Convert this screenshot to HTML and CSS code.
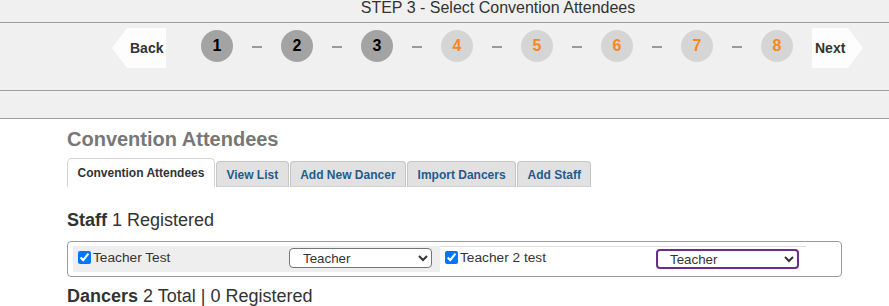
FILE: index.html
```html
<!DOCTYPE html>
<html lang="en">
<head>
<meta charset="utf-8">
<title>Convention Attendees</title>
<link rel="stylesheet" href="styles.css">
</head>
<body>
<header class="wizard">
  <div class="step-title">STEP 3 - Select Convention Attendees</div>
  <nav class="steps">
    <a class="nav-btn back">Back</a>
    <span class="step done">1</span><span class="dash"></span>
    <span class="step done">2</span><span class="dash"></span>
    <span class="step done">3</span><span class="dash"></span>
    <span class="step todo">4</span><span class="dash"></span>
    <span class="step todo">5</span><span class="dash"></span>
    <span class="step todo">6</span><span class="dash"></span>
    <span class="step todo">7</span><span class="dash"></span>
    <span class="step todo">8</span>
    <a class="nav-btn next">Next</a>
  </nav>
  <div class="band"></div>
</header>
<main class="content">
  <h1 class="page-title">Convention Attendees</h1>
  <ul class="tabs">
    <li class="tab active">Convention Attendees</li>
    <li class="tab">View List</li>
    <li class="tab">Add New Dancer</li>
    <li class="tab">Import Dancers</li>
    <li class="tab">Add Staff</li>
  </ul>
  <h2 class="section"><b>Staff</b> 1 Registered</h2>
  <div class="staff-box">
    <div class="staff-row">
      <div class="staff-cell odd">
        <label class="person"><input type="checkbox" checked><span>Teacher Test</span></label>
        <select class="role"><option>Teacher</option></select>
      </div>
      <div class="staff-cell even">
        <label class="person"><input type="checkbox" checked><span>Teacher 2 test</span></label>
        <select class="role focused"><option>Teacher</option></select>
      </div>
    </div>
  </div>
  <h2 class="section dancers"><b>Dancers</b> 2 Total | 0 Registered</h2>
</main>
</body>
</html>
```
FILE: styles.css
```css
* { box-sizing: border-box; }
html, body { margin: 0; padding: 0; }
body {
  font-family: "Liberation Sans", Arial, sans-serif;
  color: #333;
  background: #fff;
  width: 889px;
  height: 306px;
  overflow: hidden;
}

.wizard { background: #f0f0f0; }

.step-title {
  height: 23px;
  font-size: 16px;
  line-height: 16px;
  text-align: center;
  padding-left: 107px;
  border-bottom: 1px solid #9d9d9d;
  color: #333;
}

.steps {
  display: flex;
  align-items: flex-start;
  height: 68px;
  padding-left: 112px;
  border-bottom: 1px solid #9d9d9d;
}

.nav-btn {
  display: block;
  height: 40px;
  margin-top: 5px;
  background: #fdfdfd;
  font-size: 14px;
  font-weight: bold;
  line-height: 40px;
  color: #333;
}
.nav-btn.back {
  width: 54px;
  padding-left: 18px;
  margin-right: 35px;
  clip-path: polygon(15px 0, 100% 0, 100% 100%, 15px 100%, 0 50%);
}
.nav-btn.next {
  width: 51px;
  padding-left: 3px;
  margin-left: 19px;
  clip-path: polygon(0 0, 36px 0, 100% 50%, 36px 100%, 0 100%);
}

.step {
  width: 32px;
  height: 32px;
  margin-top: 7px;
  border-radius: 50%;
  font-size: 16px;
  font-weight: bold;
  line-height: 31px;
  text-align: center;
}
.step.done { background: #a3a3a3; color: #000; }
.step.todo { background: #d5d5d5; color: #f7861f; }

.dash {
  width: 10px;
  height: 2px;
  margin: 23px 19px 0;
  background: #9a9a9a;
}

.band {
  height: 28px;
  border-bottom: 1px solid #9d9d9d;
}

.content {
  margin-left: 67px;
  width: 775px;
}

.page-title {
  margin: 8px 0 0;
  font-size: 20px;
  line-height: 24px;
  font-weight: bold;
  color: #777;
}

.tabs {
  display: flex;
  align-items: flex-end;
  gap: 1px;
  list-style: none;
  margin: 7px 0 0;
  padding: 0;
  height: 29px;
}
.tab {
  height: 26px;
  padding: 0 9.5px;
  border: 1px solid #c6c6c6;
  border-bottom-color: #d0d0d0;
  border-radius: 4px 4px 0 0;
  background: #e1e1e1;
  color: #1f5c8e;
  font-size: 12px;
  font-weight: bold;
  line-height: 27px;
}
.tab.active {
  height: 29px;
  padding: 0 9.5px;
  border-color: #d3d3d3;
  border-bottom: none;
  border-radius: 5px 5px 0 0;
  background: #fff;
  color: #333;
  line-height: 29px;
}

.section {
  margin: 23px 0 0;
  font-size: 18px;
  line-height: 21px;
  font-weight: normal;
  color: #333;
}
.section b { font-weight: bold; }
.section.dancers { margin-top: 9px; }

.staff-box {
  margin-top: 10px;
  height: 36px;
  padding: 4px 35px 4px 5px;
  border: 1px solid #9a9a9a;
  border-radius: 4px;
}
.staff-row {
  display: flex;
  height: 26px;
}
.staff-cell {
  display: flex;
  align-items: flex-start;
  height: 26px;
}
.staff-cell.odd { width: 367px; background: #eee; }
.staff-cell.even { width: 366px; border-top: 1px solid #dcdcdc; }

.person {
  display: flex;
  align-items: flex-start;
  width: 216px;
  padding-left: 5px;
  font-size: 13.7px;
  line-height: 15px;
  color: #333;
}
.person input {
  width: 13px;
  height: 13px;
  margin: 5px 2px 0 0;
}
.person span { margin-top: 4px; }

.role {
  width: 143px;
  height: 20px;
  margin-top: 2px;
  padding: 0 0 0 9px;
  font-family: "Liberation Sans", Arial, sans-serif;
  font-size: 13.33px;
  color: #333;
  background: #fff;
  border: 1px solid #767676;
  border-radius: 4px;
}
.role.focused {
  border: 2px solid #6c2c8d;
  padding-left: 8px;
}
.staff-cell.even .person input { margin-top: 4px; }
.staff-cell.even .person span { margin-top: 3px; }
```
